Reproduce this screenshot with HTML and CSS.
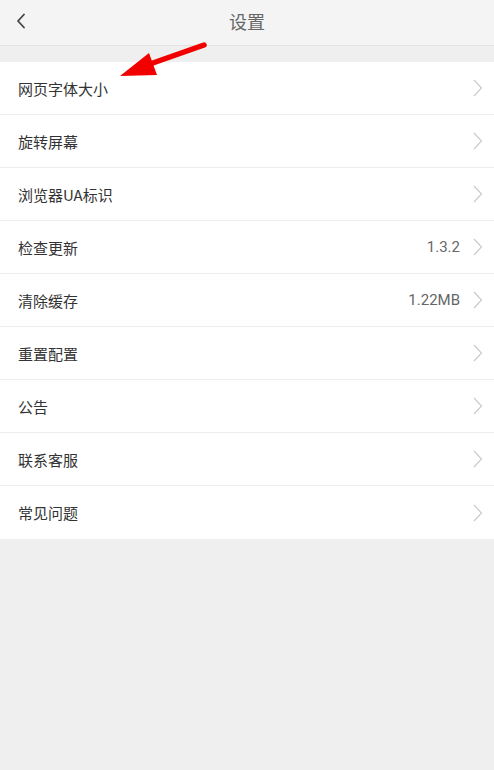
FILE: index.html
```html
<!DOCTYPE html>
<html lang="zh">
<head>
<meta charset="utf-8">
<link rel="stylesheet" href="styles.css">
</head>
<body>
<div class="page">
  <header class="topbar">
    <svg class="back" width="10" height="16" viewBox="0 0 10 16"><path d="M8 1.5 L2 8 L8 14.5" fill="none" stroke="#444" stroke-width="1.8" stroke-linecap="round" stroke-linejoin="round"/></svg>
    <div class="title">设置</div>
  </header>
  <div class="gap"></div>
  <ul class="list">
    <li class="row"><span class="label">网页字体大小</span><span class="right"><svg class="chev" width="10" height="18" viewBox="0 0 10 18"><path d="M1 1 L8.5 9 L1 17" fill="none" stroke="#c8c8c8" stroke-width="1.1"/></svg></span></li>
    <li class="row"><span class="label">旋转屏幕</span><span class="right"><svg class="chev" width="10" height="18" viewBox="0 0 10 18"><path d="M1 1 L8.5 9 L1 17" fill="none" stroke="#c8c8c8" stroke-width="1.1"/></svg></span></li>
    <li class="row"><span class="label">浏览器UA标识</span><span class="right"><svg class="chev" width="10" height="18" viewBox="0 0 10 18"><path d="M1 1 L8.5 9 L1 17" fill="none" stroke="#c8c8c8" stroke-width="1.1"/></svg></span></li>
    <li class="row"><span class="label">检查更新</span><span class="right"><span class="value">1.3.2</span><svg class="chev" width="10" height="18" viewBox="0 0 10 18"><path d="M1 1 L8.5 9 L1 17" fill="none" stroke="#c8c8c8" stroke-width="1.1"/></svg></span></li>
    <li class="row"><span class="label">清除缓存</span><span class="right"><span class="value">1.22MB</span><svg class="chev" width="10" height="18" viewBox="0 0 10 18"><path d="M1 1 L8.5 9 L1 17" fill="none" stroke="#c8c8c8" stroke-width="1.1"/></svg></span></li>
    <li class="row"><span class="label">重置配置</span><span class="right"><svg class="chev" width="10" height="18" viewBox="0 0 10 18"><path d="M1 1 L8.5 9 L1 17" fill="none" stroke="#c8c8c8" stroke-width="1.1"/></svg></span></li>
    <li class="row"><span class="label">公告</span><span class="right"><svg class="chev" width="10" height="18" viewBox="0 0 10 18"><path d="M1 1 L8.5 9 L1 17" fill="none" stroke="#c8c8c8" stroke-width="1.1"/></svg></span></li>
    <li class="row"><span class="label">联系客服</span><span class="right"><svg class="chev" width="10" height="18" viewBox="0 0 10 18"><path d="M1 1 L8.5 9 L1 17" fill="none" stroke="#c8c8c8" stroke-width="1.1"/></svg></span></li>
    <li class="row"><span class="label">常见问题</span><span class="right"><svg class="chev" width="10" height="18" viewBox="0 0 10 18"><path d="M1 1 L8.5 9 L1 17" fill="none" stroke="#c8c8c8" stroke-width="1.1"/></svg></span></li>
  </ul>
  <svg class="arrow" width="494" height="100" viewBox="0 0 494 100">
    <line x1="204" y1="45" x2="150" y2="64" stroke="#f20000" stroke-width="5.5" stroke-linecap="round"/>
    <polygon points="120,76 149,53 157,75" fill="#f20000"/>
  </svg>
</div>
</body>
</html>
```
FILE: styles.css
```css
* { box-sizing: border-box; }
html, body { margin: 0; padding: 0; }
body {
  background: #efefef;
  font-family: "Noto Sans CJK SC", "Liberation Sans", sans-serif;
  width: 494px;
  height: 770px;
  overflow: hidden;
}
.page { position: relative; }
.topbar {
  height: 46px;
  background: #f4f4f4;
  border-bottom: 1px solid #e4e4e4;
  display: flex;
  align-items: center;
  justify-content: center;
  position: relative;
}
.back { position: absolute; left: 16px; top: 13px; }
.title {
  font-size: 18px;
  color: #666;
  margin-top: -4px;
}
.gap { height: 16px; }
.list {
  list-style: none;
  margin: 0;
  padding: 0;
  background: #fff;
}
.row {
  height: 53px;
  display: flex;
  align-items: center;
  justify-content: space-between;
  padding: 0 11px 0 18px;
  border-bottom: 1px solid #ececec;
}
.row:last-child { border-bottom: none; }
.label {
  font-size: 15px;
  color: #333;
}
.right {
  display: flex;
  align-items: center;
}
.value {
  font-family: "Roboto", "Liberation Sans", sans-serif;
  font-size: 15px;
  color: #666;
  margin-right: 13px;
}
.chev { display: block; }
.arrow {
  position: absolute;
  left: 0;
  top: 0;
  pointer-events: none;
}
```
